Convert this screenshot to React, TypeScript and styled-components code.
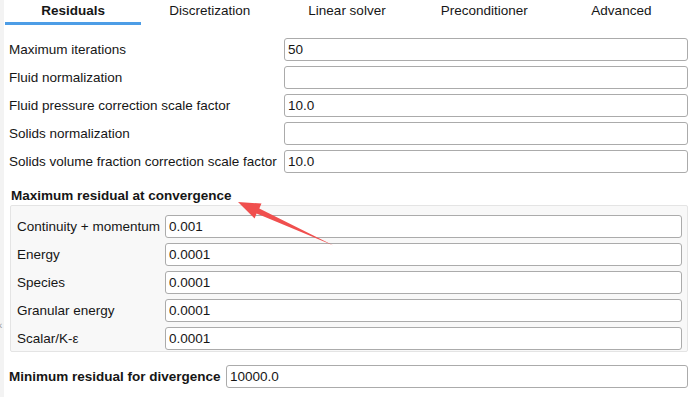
import { Fragment } from 'react';
import styled, { createGlobalStyle } from 'styled-components';

const GlobalStyle = createGlobalStyle`
  html, body {
    margin: 0;
    padding: 0;
    background: #ffffff;
  }
  body {
    font-family: 'Liberation Sans', Arial, sans-serif;
    font-size: 13.5px;
    color: #161616;
  }
`;

const TABS = ['Residuals', 'Discretization', 'Linear solver', 'Preconditioner', 'Advanced'];

const OUTER_FIELDS = [
  { label: 'Maximum iterations', value: '50' },
  { label: 'Fluid normalization', value: '' },
  { label: 'Fluid pressure correction scale factor', value: '10.0' },
  { label: 'Solids normalization', value: '' },
  { label: 'Solids volume fraction correction scale factor', value: '10.0' },
];

const RESIDUAL_FIELDS = [
  { label: 'Continuity + momentum', value: '0.001' },
  { label: 'Energy', value: '0.0001' },
  { label: 'Species', value: '0.0001' },
  { label: 'Granular energy', value: '0.0001' },
  { label: 'Scalar/K-ε', value: '0.0001' },
];

const Page = styled.div`
  position: relative;
  display: flex;
  width: 690px;
  height: 397px;
  overflow: hidden;
`;

const SideStrip = styled.div`
  width: 4px;
  flex: none;
  background: #f3f3f3;
  padding-top: 319px;
  box-sizing: border-box;
`;

const Chevron = styled.span`
  display: block;
  margin-left: -1px;
  color: #9a9a9a;
  font-size: 10px;
  line-height: 14px;
`;

const Main = styled.div`
  flex: 1;
  min-width: 0;
`;

const TabBar = styled.div`
  display: grid;
  grid-template-columns: repeat(5, 1fr);
  height: 25px;
`;

const Tab = styled.div<{ active?: boolean }>`
  text-align: center;
  line-height: 22px;
  font-weight: ${(props) => (props.active ? 700 : 400)};
  border-bottom: 3px solid ${(props) => (props.active ? '#4d9de6' : 'transparent')};
  margin-left: ${(props) => (props.active ? '1px' : '0')};
`;

const Form = styled.div`
  padding: 13px 2px 0 5px;
`;

const FieldList = styled.div<{ labelWidth: number }>`
  display: grid;
  grid-template-columns: ${(props) => props.labelWidth}px 1fr;
  grid-auto-rows: 23px;
  row-gap: 5px;
  align-items: center;
`;

const Label = styled.label<{ bold?: boolean }>`
  white-space: nowrap;
  font-weight: ${(props) => (props.bold ? 700 : 400)};
`;

const Input = styled.input`
  box-sizing: border-box;
  height: 23px;
  width: 100%;
  margin: 0;
  padding: 0 3px;
  border: 1px solid #ababab;
  border-radius: 3px;
  background: #ffffff;
  font-family: 'Liberation Sans', Arial, sans-serif;
  font-size: 13.5px;
  color: #161616;
  outline: none;
`;

const GroupTitle = styled.div`
  margin: 14px 0 0 2px;
  font-weight: 700;
  line-height: 18px;
`;

const Group = styled.div`
  margin: 0 0 0 1px;
  padding: 9px 5px 1px 6px;
  background: #f8f8f8;
  border: 1px solid #e4e4e4;
  border-radius: 2px;
`;

const DivergenceRow = styled.div`
  margin-top: 13px;
`;

const Overlay = styled.svg`
  position: absolute;
  left: 0;
  top: 0;
  pointer-events: none;
`;

type Field = { label: string; value: string };

function Fields({ fields, labelWidth }: { fields: Field[]; labelWidth: number }) {
  return (
    <FieldList labelWidth={labelWidth}>
      {fields.map((f) => (
        <Fragment key={f.label}>
          <Label>{f.label}</Label>
          <Input defaultValue={f.value} />
        </Fragment>
      ))}
    </FieldList>
  );
}

function App() {
  return (
    <>
      <GlobalStyle />
      <Page>
        <SideStrip>
          <Chevron>‹</Chevron>
        </SideStrip>
        <Main>
          <TabBar>
            {TABS.map((t, i) => (
              <Tab key={t} active={i === 0}>
                {t}
              </Tab>
            ))}
          </TabBar>
          <Form>
            <Fields fields={OUTER_FIELDS} labelWidth={275} />
            <GroupTitle>Maximum residual at convergence</GroupTitle>
            <Group>
              <Fields fields={RESIDUAL_FIELDS} labelWidth={148} />
            </Group>
            <DivergenceRow>
              <FieldList labelWidth={217}>
                <Label bold>Minimum residual for divergence</Label>
                <Input defaultValue="10000.0" />
              </FieldList>
            </DivergenceRow>
          </Form>
        </Main>
        {/* red annotation arrow pointing at the group title */}
        <Overlay width="690" height="397" viewBox="0 0 690 397">
          <polygon
            points="238,202 261.5,203.5 259.3,208.6 333.5,245.5 256.6,213.4 254.6,218.5"
            fill="#f04f4e"
          />
        </Overlay>
      </Page>
    </>
  );
}

export default App;
